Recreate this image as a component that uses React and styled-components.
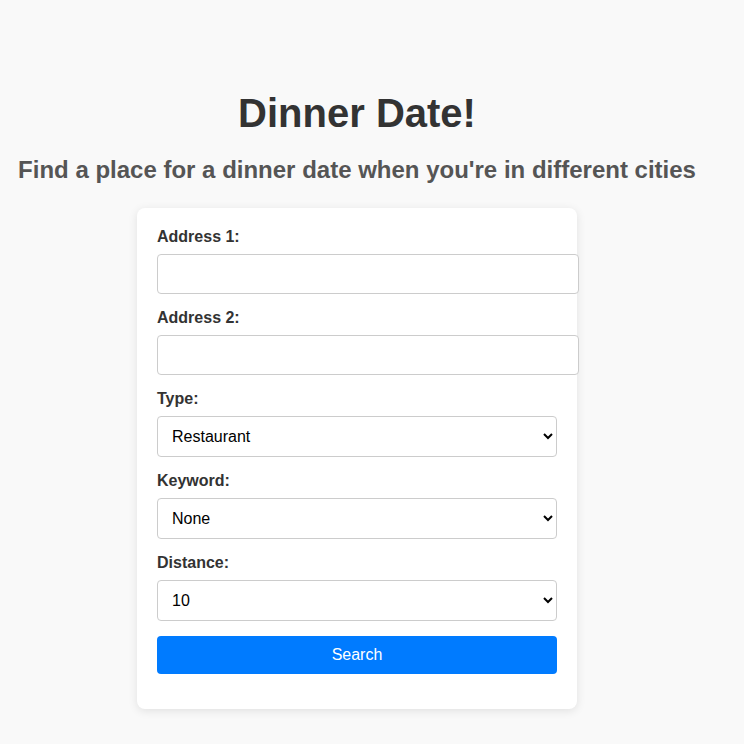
import { useState } from "react";
import styled, { createGlobalStyle } from "styled-components";

const GlobalStyle = createGlobalStyle`
    body {
        margin: 0;
        background-color: #f9f9f9;
        font-family: "Liberation Sans", Arial, sans-serif;
    }
`;

function App() {
    const [address1, setAddress1] = useState("");
    const [address2, setAddress2] = useState("");
    const [type, setType] = useState("restaurant");
    const [keyword, setKeyword] = useState("none");
    const [distance, setDistance] = useState("10");

    return (
        <>
            <GlobalStyle />
            <Page>
                <Title>Dinner Date!</Title>
                <Subtitle>Find a place for a dinner date when you're in different cities</Subtitle>
                <Card onSubmit={(e) => e.preventDefault()}>
                    <Field>
                        <Label htmlFor="address1">Address 1:</Label>
                        <TextInput id="address1" value={address1} onChange={(e) => setAddress1(e.target.value)} />
                    </Field>
                    <Field>
                        <Label htmlFor="address2">Address 2:</Label>
                        <TextInput id="address2" value={address2} onChange={(e) => setAddress2(e.target.value)} />
                    </Field>
                    <Field>
                        <Label htmlFor="type">Type:</Label>
                        <Select id="type" value={type} onChange={(e) => setType(e.target.value)}>
                            <option value="restaurant">Restaurant</option>
                            <option value="bar">Bar</option>
                            <option value="cafe">Cafe</option>
                        </Select>
                    </Field>
                    <Field>
                        <Label htmlFor="keyword">Keyword:</Label>
                        <Select id="keyword" value={keyword} onChange={(e) => setKeyword(e.target.value)}>
                            <option value="none">None</option>
                            <option value="italian">Italian</option>
                            <option value="sushi">Sushi</option>
                        </Select>
                    </Field>
                    <Field>
                        <Label htmlFor="distance">Distance:</Label>
                        <Select id="distance" value={distance} onChange={(e) => setDistance(e.target.value)}>
                            <option value="5">5</option>
                            <option value="10">10</option>
                            <option value="20">20</option>
                        </Select>
                    </Field>
                    <SearchButton type="submit">Search</SearchButton>
                </Card>
            </Page>
        </>
    );
}

export default App;

const Page = styled.div`
    width: calc(100% - 30px);
    padding-top: 91px;
    padding-bottom: 40px;
    text-align: center;
`;

const Title = styled.h1`
    margin: 0;
    font-size: 40px;
    font-weight: bold;
    color: #333333;
`;

const Subtitle = styled.h2`
    margin: 20px 0 24px 0;
    font-size: 24px;
    font-weight: bold;
    color: #555555;
`;

const Card = styled.form`
    width: 400px;
    margin: 0 auto;
    padding: 20px;
    background-color: #ffffff;
    border-radius: 8px;
    box-shadow: 0 2px 10px rgba(0, 0, 0, 0.1);
    text-align: left;
`;

const Field = styled.div`
    margin-bottom: 15px;
`;

const Label = styled.label`
    display: block;
    margin-bottom: 8px;
    font-size: 16px;
    font-weight: bold;
    color: #333333;
`;

const TextInput = styled.input`
    display: block;
    width: 100%;
    margin: 0;
    padding: 10px;
    font-family: "Liberation Sans", Arial, sans-serif;
    font-size: 16px;
    border: 1px solid #cccccc;
    border-radius: 4px;
    background-color: #ffffff;
`;

const Select = styled.select`
    display: block;
    width: 100%;
    margin: 0;
    padding: 10px;
    font-family: "Liberation Sans", Arial, sans-serif;
    font-size: 16px;
    color: #000000;
    border: 1px solid #cccccc;
    border-radius: 4px;
    background-color: #ffffff;
`;

const SearchButton = styled.button`
    display: block;
    width: 100%;
    margin-bottom: 15px;
    padding: 10px;
    font-family: "Liberation Sans", Arial, sans-serif;
    font-size: 16px;
    color: #ffffff;
    background-color: #007bff;
    border: none;
    border-radius: 4px;
    cursor: pointer;
`;
